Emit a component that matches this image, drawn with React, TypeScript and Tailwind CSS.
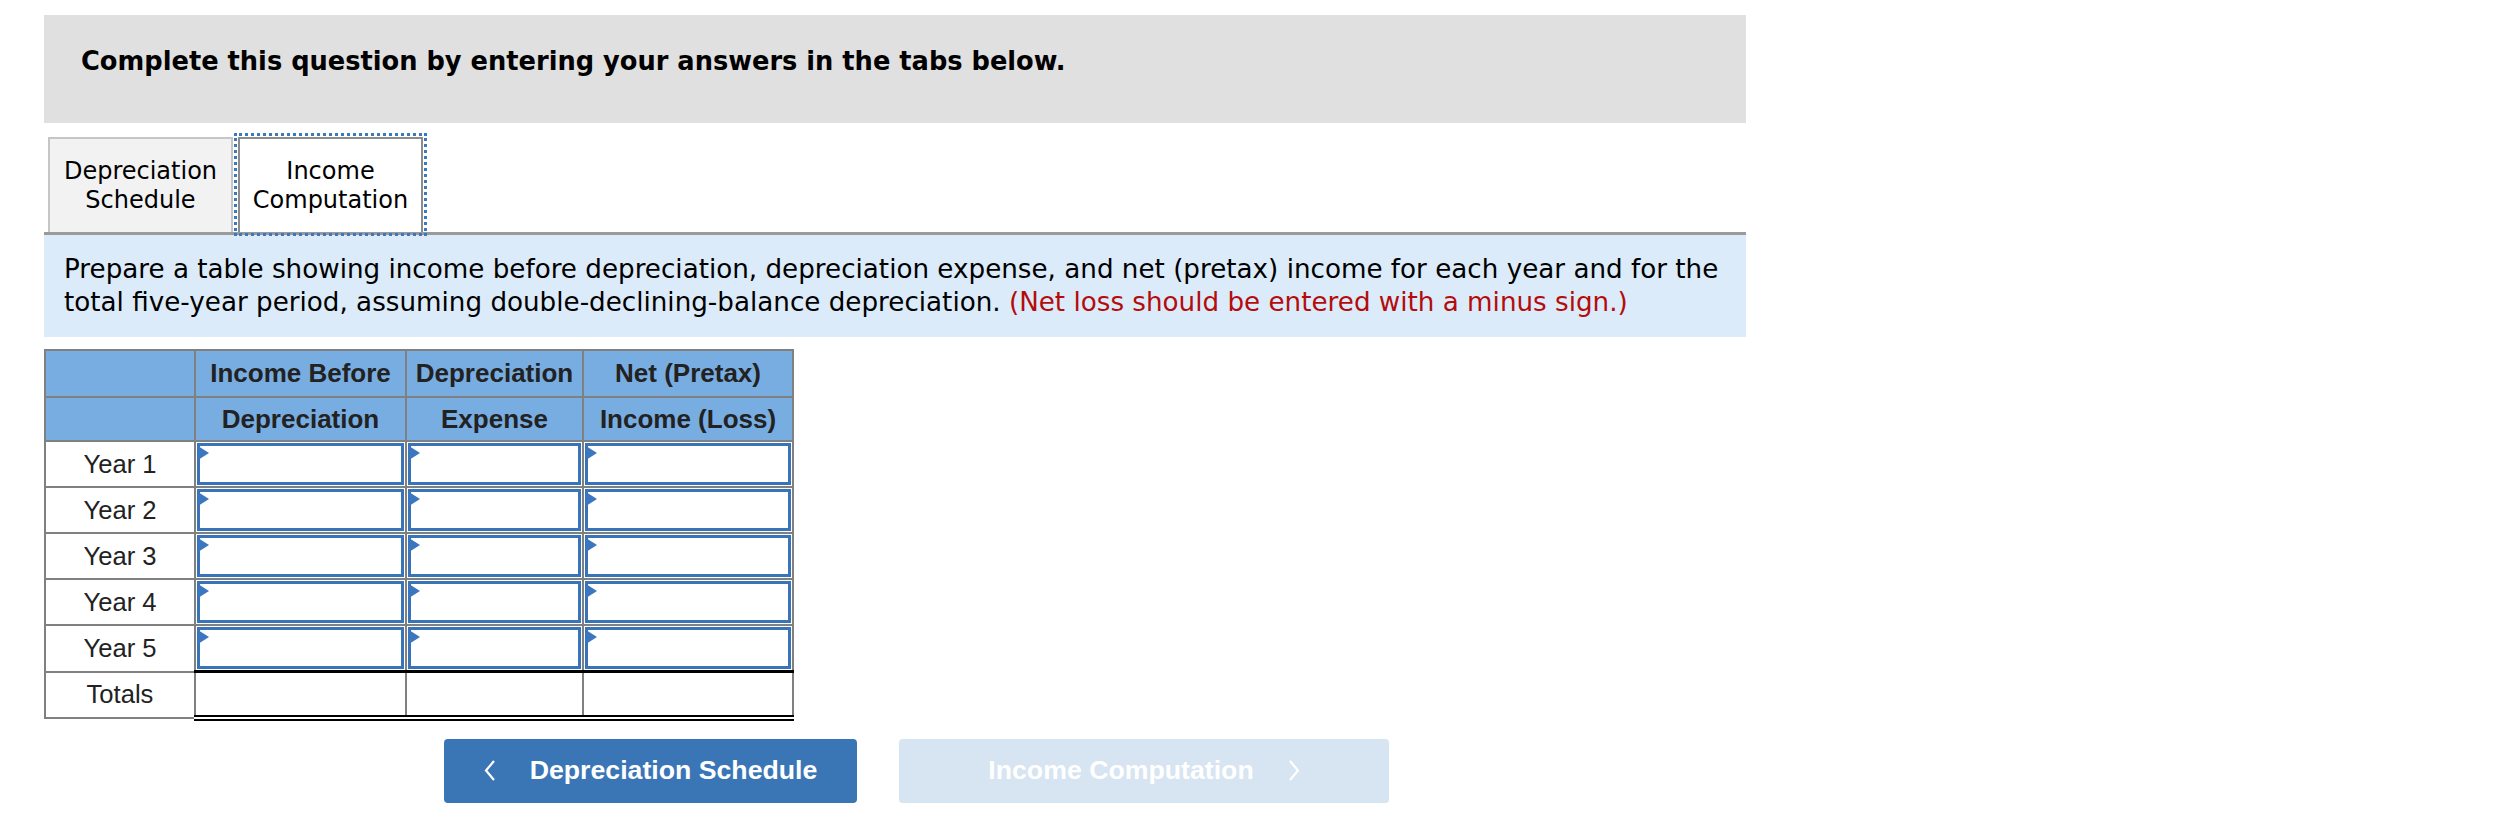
import React from "react";

const verdana = { fontFamily: '"DejaVu Sans", Verdana, sans-serif' };
const arial = { fontFamily: '"Liberation Sans", Arial, sans-serif' };

const years = ["Year 1", "Year 2", "Year 3", "Year 4", "Year 5"];

const InputCell: React.FC = () => (
  <td className="relative border-2 border-[#808080] p-[1px] align-top">
    <div className="h-[42px] w-full border-[3px] border-[#3a74b8] bg-white" />
    <svg
      className="absolute left-[2px] top-[4px]"
      width="11"
      height="14"
      viewBox="0 0 11 14"
    >
      <polygon points="0,0 11,7 0,14" fill="#3b77c0" />
    </svg>
  </td>
);

const Chevron: React.FC<{ dir: "left" | "right" }> = ({ dir }) => (
  <svg width="12" height="21" viewBox="0 0 12 21" fill="none">
    <polyline
      points={dir === "left" ? "10,1 2,10.5 10,20" : "2,1 10,10.5 2,20"}
      stroke="white"
      strokeWidth="2.2"
      strokeLinejoin="miter"
    />
  </svg>
);

const totalCell =
  "border-x-2 border-t-[3px] border-b-[6px] border-x-[#808080] border-t-black border-b-black [border-bottom-style:double]";

export default function App() {
  return (
    <div className="min-h-screen bg-white pl-[44px] pt-[15px]">
      <div className="w-[1702px]">
        {/* Question header */}
        <div
          className="h-[108px] bg-[#e0e0e0] pl-[37px] pt-[28px] text-[25.7px] font-bold leading-[36px] text-black"
          style={verdana}
        >
          Complete this question by entering your answers in the tabs below.
        </div>

        {/* Tabs */}
        <div
          className="mt-[14px] flex items-end gap-[5px] border-b-[3px] border-[#9a9a9a] pl-[4px] text-[24px] leading-[29px] text-black"
          style={verdana}
        >
          <div className="flex h-[95px] w-[185px] items-center justify-center border-2 border-b-0 border-[#c6c6c6] bg-[#f2f2f2] text-center">
            Depreciation
            <br />
            Schedule
          </div>
          <div className="flex h-[95px] w-[185px] items-center justify-center border-2 border-b-0 border-[#8c8c8c] bg-white text-center outline-3 outline-offset-1 outline-dotted outline-[#3b78c0]">
            Income
            <br />
            Computation
          </div>
        </div>

        {/* Instructions */}
        <div
          className="bg-[#dcebf9] px-[20px] py-[18px] text-[26.2px] leading-[33px] text-black"
          style={verdana}
        >
          <div className="whitespace-nowrap">
            Prepare a table showing income before depreciation, depreciation expense, and net (pretax) income for each year and for the
          </div>
          <div className="whitespace-nowrap">
            total five-year period, assuming double-declining-balance depreciation.{" "}
            <span className="text-[#b40c0c]">(Net loss should be entered with a minus sign.)</span>
          </div>
        </div>

        {/* Table */}
        <table
          className="mt-[12px] w-[748px] table-fixed border-collapse text-[#222]"
          style={arial}
        >
          <colgroup>
            <col className="w-[150px]" />
            <col className="w-[211px]" />
            <col className="w-[177px]" />
            <col className="w-[210px]" />
          </colgroup>
          <thead>
            <tr className="h-[47px] bg-[#78ade2] text-[26px] font-bold">
              <th className="border-2 border-[#808080]" />
              <th className="border-2 border-[#808080] text-center">Income Before</th>
              <th className="border-2 border-[#808080] text-center">Depreciation</th>
              <th className="border-2 border-[#808080] text-center">Net (Pretax)</th>
            </tr>
            <tr className="h-[44px] bg-[#78ade2] text-[26px] font-bold">
              <th className="border-2 border-[#808080]" />
              <th className="border-2 border-[#808080] text-center">Depreciation</th>
              <th className="border-2 border-[#808080] text-center">Expense</th>
              <th className="border-2 border-[#808080] text-center">Income (Loss)</th>
            </tr>
          </thead>
          <tbody className="text-[25.6px]">
            {years.map((y) => (
              <tr key={y}>
                <td className="border-2 border-[#808080] text-center">{y}</td>
                <InputCell />
                <InputCell />
                <InputCell />
              </tr>
            ))}
            <tr className="h-[46px]">
              <td className="border-2 border-[#808080] text-center">Totals</td>
              <td className={totalCell} />
              <td className={totalCell} />
              <td className={totalCell} />
            </tr>
          </tbody>
        </table>

        {/* Navigation */}
        <div
          className="ml-[400px] mt-[18px] flex gap-[42px] text-[26.7px] font-bold text-white"
          style={arial}
        >
          <button className="flex h-[64px] w-[413px] items-center justify-center gap-[34px] rounded-[4px] bg-[#3a76b6]">
            <Chevron dir="left" />
            <span>Depreciation Schedule</span>
          </button>
          <button className="flex h-[64px] w-[490px] items-center justify-center gap-[34px] rounded-[4px] bg-[#d7e4f1]">
            <span>Income Computation</span>
            <Chevron dir="right" />
          </button>
        </div>
      </div>
    </div>
  );
}
